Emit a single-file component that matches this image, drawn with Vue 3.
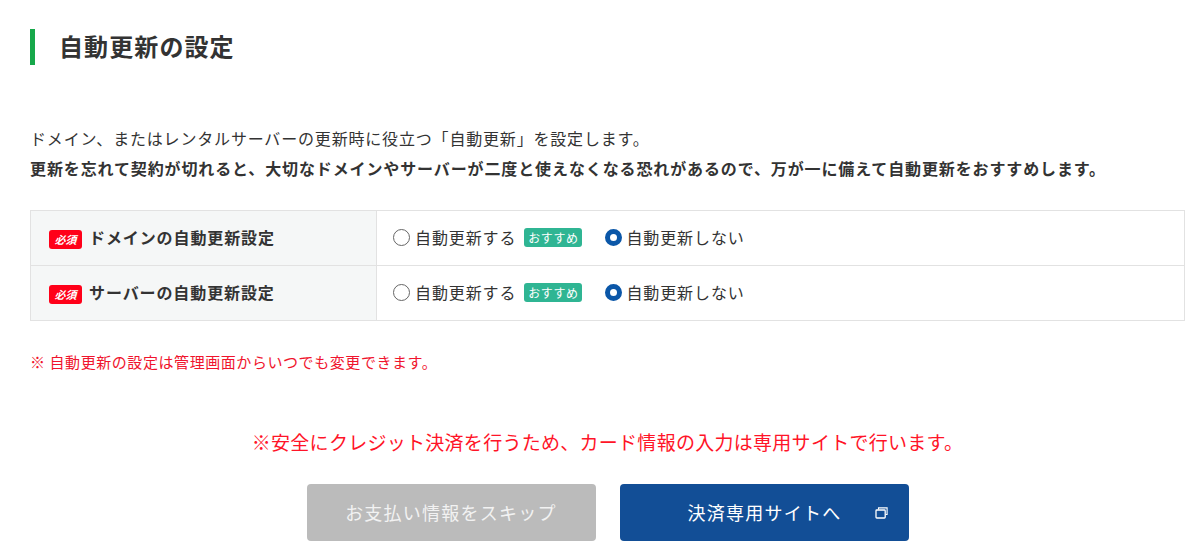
<script setup>
const rows = [
  { name: 'domain', label: 'ドメインの自動更新設定' },
  { name: 'server', label: 'サーバーの自動更新設定' }
]
</script>

<template>
  <div class="page">
    <h2 class="title">自動更新の設定</h2>
    <p class="lead">ドメイン、またはレンタルサーバーの更新時に役立つ「自動更新」を設定します。</p>
    <p class="lead strong">更新を忘れて契約が切れると、大切なドメインやサーバーが二度と使えなくなる恐れがあるので、万が一に備えて自動更新をおすすめします。</p>

    <div class="table">
      <div v-for="row in rows" :key="row.name" class="row">
        <div class="head">
          <span class="required">必須</span>
          <span>{{ row.label }}</span>
        </div>
        <div class="cell">
          <span class="radio"></span>
          <span>自動更新する</span>
          <span class="recommend">おすすめ</span>
          <span class="radio on"></span>
          <span>自動更新しない</span>
        </div>
      </div>
    </div>

    <p class="note">※ 自動更新の設定は管理画面からいつでも変更できます。</p>
    <p class="warning">※安全にクレジット決済を行うため、カード情報の入力は専用サイトで行います。</p>

    <div class="buttons">
      <div class="btn skip">お支払い情報をスキップ</div>
      <div class="btn pay">
        <span>決済専用サイトへ</span>
        <svg class="ext" width="13" height="12" viewBox="0 0 13 12" fill="none" stroke="#fff">
          <path d="M3.5 2.5V0.9H12.1V7.5H10.5" stroke-width="1.1" />
          <rect x="1" y="3" width="9.2" height="8" rx="0.8" stroke-width="1.3" />
        </svg>
      </div>
    </div>
  </div>
</template>

<style>
body {
  background: #fff;
}
</style>

<style scoped>
.page {
  box-sizing: border-box;
  width: 1200px;
  height: 556px;
  overflow: hidden;
  padding: 29px 15px 0 30px;
  font-family: "Noto Sans CJK JP", "Noto Sans", sans-serif;
  color: #333;
}
.title {
  margin: 0 0 58px;
  height: 36px;
  border-left: 5px solid #16a84a;
  padding-left: 24px;
  font-size: 24px;
  line-height: 34px;
  font-weight: 700;
  letter-spacing: 1.1px;
}
.lead {
  margin: 0;
  font-size: 16px;
  line-height: 30px;
  letter-spacing: 0.82px;
}
.strong {
  font-weight: 700;
  letter-spacing: 0.88px;
}
.table {
  margin-top: 27px;
  border: 1px solid #e2e2e2;
  border-bottom: 0;
}
.row {
  display: flex;
  box-sizing: border-box;
  height: 55px;
  border-bottom: 1px solid #e2e2e2;
  letter-spacing: 0.9px;
}
.head {
  width: 346px;
  flex: none;
  display: flex;
  align-items: center;
  gap: 7px;
  padding: 0 0 3px 18px;
  box-sizing: border-box;
  background: #f5f7f7;
  border-right: 1px solid #e2e2e2;
  font-size: 16px;
  font-weight: 700;
}
.required {
  width: 33px;
  height: 19px;
  margin-top: 5px;
  border-radius: 3px;
  background: #ff0019;
  color: #fff;
  font-size: 11px;
  font-style: italic;
  font-weight: 700;
  line-height: 19px;
  letter-spacing: 0;
  text-align: center;
}
.cell {
  display: flex;
  align-items: center;
  padding: 0 0 3px 16px;
  font-size: 16px;
}
.radio {
  width: 17px;
  height: 17px;
  margin-top: 2px;
  box-sizing: border-box;
  border: 1.5px solid #666;
  border-radius: 50%;
  margin-right: 5px;
}
.radio.on {
  border: 5.5px solid #0b57a8;
  margin-left: 23px;
  margin-right: 4px;
}
.recommend {
  margin-left: 8px;
  margin-top: 2px;
  width: 58px;
  height: 19px;
  border-radius: 3px;
  background: #2fb593;
  color: #fff;
  font-size: 12px;
  line-height: 19px;
  letter-spacing: 0.6px;
  text-align: center;
}
.note {
  margin: 29px 0 0;
  font-size: 15px;
  line-height: 24px;
  letter-spacing: 0.57px;
  color: #f0142d;
}
.warning {
  margin: 54px 0 0;
  text-align: center;
  font-size: 19px;
  line-height: 28px;
  letter-spacing: 0.28px;
  color: #ff1428;
}
.buttons {
  margin-top: 28px;
  display: flex;
  justify-content: center;
  gap: 24px;
}
.btn {
  width: 289px;
  height: 57px;
  box-sizing: border-box;
  border-radius: 4px;
  padding-bottom: 2px;
  color: #fff;
  font-size: 18px;
  letter-spacing: 1.25px;
  display: flex;
  align-items: center;
  justify-content: center;
}
.skip {
  background: #bbb;
  color: #f2f2f2;
}
.pay {
  background: #124e96;
  justify-content: flex-start;
  padding-left: 68px;
}
.ext {
  margin: 3px 0 0 33px;
}
</style>
